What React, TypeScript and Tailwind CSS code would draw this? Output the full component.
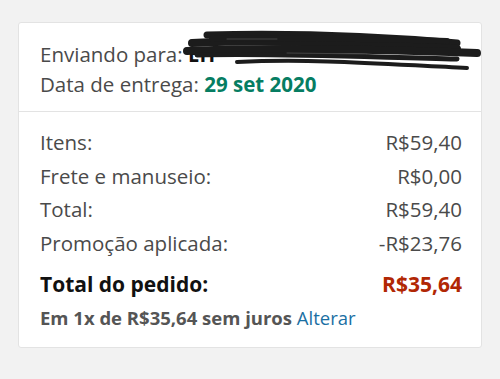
import React from "react";

const rows = [
  ["Itens:", "R$59,40"],
  ["Frete e manuseio:", "R$0,00"],
  ["Total:", "R$59,40"],
  ["Promoção aplicada:", "-R$23,76"],
];

export default function App() {
  return (
    <div
      className="w-[500px] h-[379px] bg-[#f2f2f2] pt-[22px] px-[18px]"
      style={{ fontFamily: "'Open Sans', 'Noto Sans', sans-serif" }}
    >
      <div className="bg-white border border-[#e3e3e3] rounded-[3px]">
        <div className="relative pl-[21px] pr-[19px] pt-[16px] pb-[12px] text-[20.5px] leading-[30px] text-[#4a4a4a]">
          <div className="whitespace-nowrap">
            Enviando para: <span className="font-bold text-[#111]">EH</span>
          </div>
          <div>
            Data de entrega:{" "}
            <span className="font-bold text-[#067d62]">29 set 2020</span>
          </div>
          <svg
            className="absolute left-[148px] top-[6px]"
            width="320"
            height="44"
            viewBox="0 0 320 44"
          >
            <g fill="none" stroke="#1c1c1c" strokeLinecap="round">
              <path d="M40 6 C120 4 200 6 290 14" strokeWidth="7" />
              <path d="M25 14 C110 10 200 14 290 20" strokeWidth="8" />
              <path d="M20 22 C100 18 200 20 310 24" strokeWidth="8" />
              <path d="M30 26 C110 24 200 28 290 30" strokeWidth="5" />
              <path d="M70 33 C150 29 230 36 300 39" strokeWidth="4" />
              <path d="M45 10 C130 8 210 10 280 12" strokeWidth="6" />
            </g>
            <g fill="none" stroke="#444" strokeLinecap="round" strokeWidth="1">
              <path d="M60 10 L110 10" />
              <path d="M120 24 L200 25" />
            </g>
          </svg>
        </div>
        <div className="border-t border-[#e3e3e3] pl-[21px] pr-[19px] pt-[14px] pb-[12px]">
          {rows.map(([l, v]) => (
            <div
              key={l}
              className="flex justify-between text-[20.5px] leading-[33.7px] text-[#4a4a4a]"
            >
              <span>{l}</span>
              <span>{v}</span>
            </div>
          ))}
          <div className="flex justify-between text-[21px] leading-[30px] font-bold mt-[8px]">
            <span className="text-[#111]">Total do pedido:</span>
            <span className="text-[#b12704]">R$35,64</span>
          </div>
          <div className="text-[18.5px] leading-[34px] font-bold text-[#555] mt-[2px]">
            Em 1x de R$35,64 sem juros{" "}
            <span className="font-normal text-[#1a6fa3]">Alterar</span>
          </div>
        </div>
      </div>
    </div>
  );
}
